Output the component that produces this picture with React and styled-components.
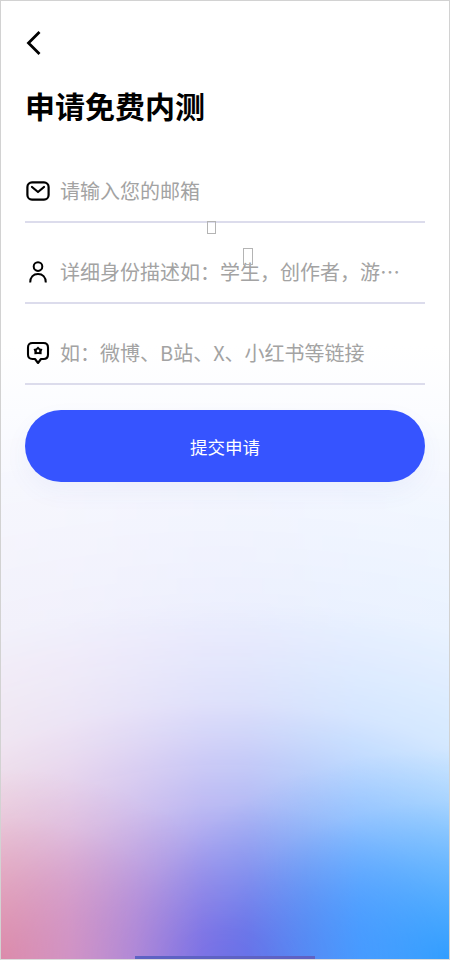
import React from 'react';
import styled, { createGlobalStyle } from 'styled-components';

const GlobalStyle = createGlobalStyle`
  html, body {
    margin: 0;
    padding: 0;
    background: #fff;
  }
  * {
    box-sizing: border-box;
  }
`;

const Screen = styled.div`
  position: relative;
  isolation: isolate;
  width: 450px;
  height: 960px;
  overflow: hidden;
  border: 1px solid #d2d2d2;
  border-bottom-color: #dcdcdc;
  padding: 0 24px;
  font-family: 'Noto Sans CJK SC', 'Noto Sans', sans-serif;
  background:
    radial-gradient(
      ellipse 260px 190px at 0% 100%,
      rgba(222, 140, 172, 1) 0%,
      rgba(222, 140, 172, 0.5) 45%,
      rgba(222, 140, 172, 0.14) 75%,
      rgba(222, 140, 172, 0) 100%
    ),
    radial-gradient(
      ellipse 320px 210px at 100% 100%,
      rgba(48, 156, 255, 1) 0%,
      rgba(48, 156, 255, 0.5) 45%,
      rgba(48, 156, 255, 0.14) 75%,
      rgba(48, 156, 255, 0) 100%
    ),
    linear-gradient(180deg, #ffffff 0%, #ffffff 36%, #f7f9ff 50%, #f4f7ff 66%);

  &::before {
    content: '';
    position: absolute;
    inset: 0;
    z-index: -1;
    background: linear-gradient(
      90deg,
      #d98aaa 0%,
      #c888c4 15%,
      #a47cd6 30%,
      #7a70e4 45%,
      #6670e8 55%,
      #4c80f2 68%,
      #3a90ff 80%,
      #349fff 100%
    );
    mask-image: radial-gradient(
      ellipse 900px 560px at 50% 100%,
      rgba(0, 0, 0, 1) 0%,
      rgba(0, 0, 0, 0.95) 5%,
      rgba(0, 0, 0, 0.74) 15%,
      rgba(0, 0, 0, 0.44) 28%,
      rgba(0, 0, 0, 0.16) 46%,
      rgba(0, 0, 0, 0.05) 64%,
      rgba(0, 0, 0, 0) 100%
    );
  }
`;

const BackButton = styled.button`
  display: block;
  width: 18px;
  height: 28px;
  margin-top: 28px;
  padding: 0;
  border: 0;
  background: none;
  color: #000;
`;

const Title = styled.h1`
  margin: 26px 0 0 0;
  font-size: 30px;
  line-height: 44px;
  font-weight: 700;
  color: #000;
`;

const Form = styled.div`
  margin-top: 15px;
`;

const Field = styled.div`
  display: flex;
  align-items: center;
  gap: 10px;
  height: 81px;
  padding: 18px 0 0;
  border-bottom: 2px solid #dcdcec;
`;

const IconSlot = styled.span`
  flex: none;
  display: flex;
  align-items: center;
  justify-content: center;
  width: 25px;
  height: 24px;
  color: #000;
`;

const Hint = styled.div`
  flex: 1;
  min-width: 0;
  font-size: 20px;
  line-height: 30px;
  color: #a3a3a3;
  white-space: nowrap;
`;

const SubmitButton = styled.button`
  display: block;
  width: 400px;
  height: 72px;
  margin-top: 25px;
  border: 0;
  border-radius: 36px;
  background: #3654ff;
  box-shadow: 0 10px 24px rgba(70, 90, 200, 0.05);
  color: #fff;
  font-family: inherit;
  font-size: 17.5px;
`;

const MissingGlyph = styled.span`
  position: absolute;
  left: ${(p) => p.$left}px;
  top: ${(p) => p.$top}px;
  width: ${(p) => p.$width}px;
  height: ${(p) => p.$height}px;
  border: 1px solid #b4b4b4;
`;

const HomeBar = styled.div`
  position: absolute;
  left: 134px;
  bottom: 0;
  width: 180px;
  height: 3px;
  background: #5e62c4;
`;

const BackIcon = () => (
  <svg width="18" height="28" viewBox="0 0 18 28" fill="none">
    <path d="M14.5 3 L3.5 14 L14.5 25" stroke="currentColor" strokeWidth="2.8" />
  </svg>
);

const MailIcon = () => (
  <svg width="24" height="20" viewBox="0 0 24 20" fill="none" stroke="currentColor" strokeWidth="2.2">
    <rect x="1.4" y="1.4" width="21.2" height="17.2" rx="4.6" />
    <path d="M6 6 L12 11 L18 6" strokeLinecap="round" strokeLinejoin="round" />
  </svg>
);

const UserIcon = () => (
  <svg width="18" height="22" viewBox="0 0 18 22" fill="none" stroke="currentColor" strokeWidth="2">
    <circle cx="9" cy="5.6" r="4.3" />
    <path d="M1.2 21.5 C1.2 16 4.5 13 9 13 C13.5 13 16.8 16 16.8 21.5" />
  </svg>
);

const ChatIcon = () => (
  <svg width="24" height="24" viewBox="0 0 24 24" fill="none">
    <path
      d="M6.5 2 H17.5 C20.5 2 22 3.5 22 6.5 V13.5 C22 16.5 20.5 18 17.5 18 H15 L12 22 L9 18 H6.5 C3.5 18 2 16.5 2 13.5 V6.5 C2 3.5 3.5 2 6.5 2 Z"
      stroke="currentColor"
      strokeWidth="2.1"
      strokeLinejoin="round"
    />
    <path
      d="M12 5.6 L14 7.4 L16.4 7.9 L15.6 10.6 L15.6 13.2 L12 13 L8.4 13.2 L8.4 10.6 L7.6 7.9 L10 7.4 Z"
      fill="currentColor"
      strokeLinejoin="round"
    />
    <circle cx="12" cy="9.9" r="1.3" fill="#fff" />
  </svg>
);

const fields = [
  { key: 'mail', icon: <MailIcon />, hint: '请输入您的邮箱' },
  { key: 'user', icon: <UserIcon />, hint: '详细身份描述如：学生，创作者，游…' },
  { key: 'link', icon: <ChatIcon />, hint: '如：微博、B站、X、小红书等链接' },
];

export default function App() {
  return (
    <>
      <GlobalStyle />
      <Screen>
        <BackButton aria-label="返回">
          <BackIcon />
        </BackButton>
        <Title>申请免费内测</Title>
        <Form>
          {fields.map((f) => (
            <Field key={f.key}>
              <IconSlot>{f.icon}</IconSlot>
              <Hint>{f.hint}</Hint>
            </Field>
          ))}
        </Form>
        <SubmitButton>提交申请</SubmitButton>
        <MissingGlyph $left={206} $top={220} $width={9} $height={13} />
        <MissingGlyph $left={242} $top={247} $width={10} $height={17} />
        <HomeBar />
      </Screen>
    </>
  );
}
